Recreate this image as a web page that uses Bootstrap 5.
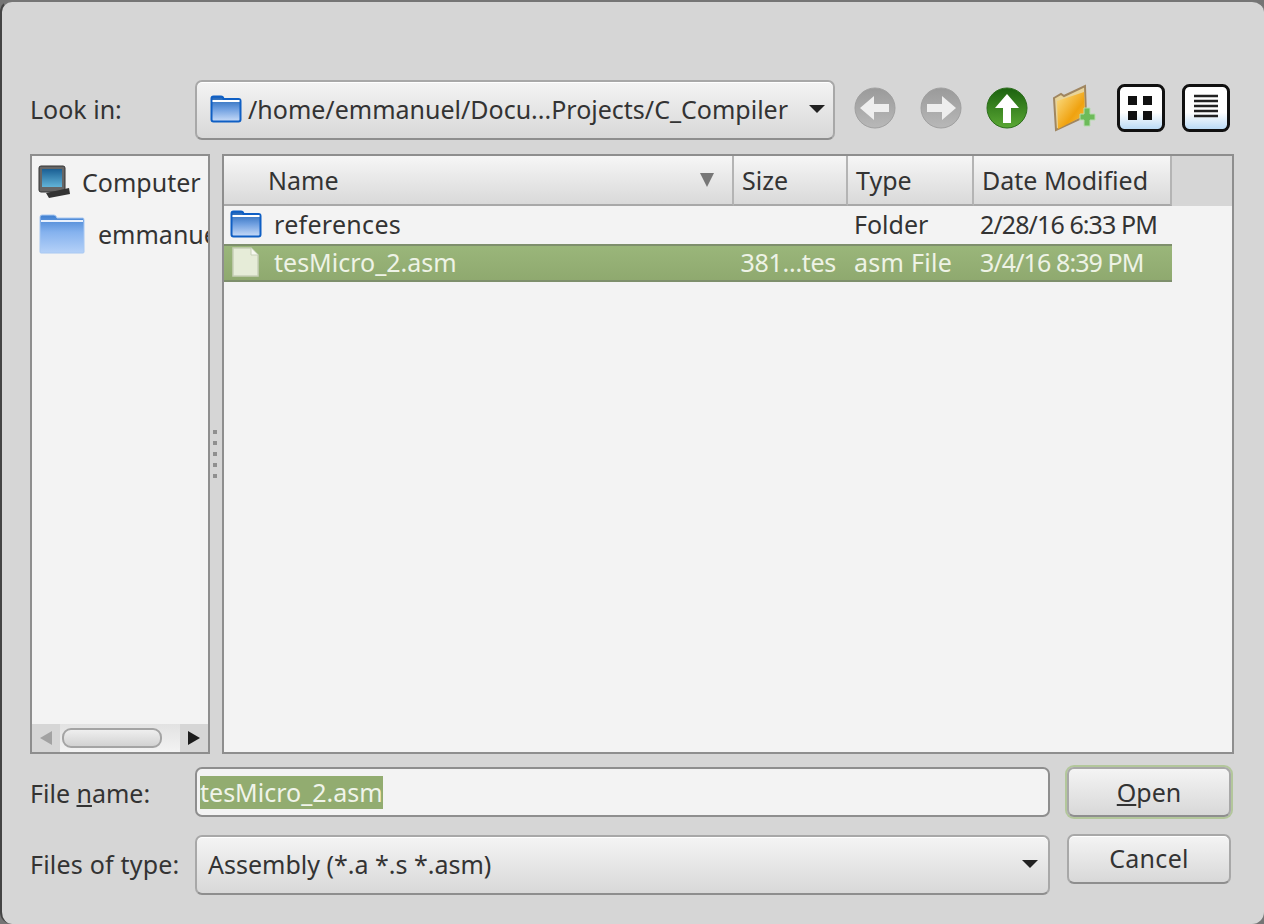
<!DOCTYPE html>
<html lang="en">
<head>
    <meta charset="UTF-8">
    <title>Open File</title>
    <link href="https://cdn.jsdelivr.net/npm/bootstrap@5.3.3/dist/css/bootstrap.min.css" rel="stylesheet">
    <style>
        html, body { height: 100%; }
        body { background: #757575; margin: 0; overflow: hidden; font-family: "Noto Sans", sans-serif; font-size: 25px; line-height: 34px; color: #333; }
        .dlg { width: 1264px; height: 924px; background: #d6d6d6; border-radius: 12px; border-top: 2px solid #767676; border-left: 2px solid #444; padding: 78px 30px 0 28px; }
        .lbl { width: 165px; flex: none; white-space: nowrap; margin: 0; }
        .lbl-up { padding-bottom: 3px; }
        .lbl-down { padding-top: 2px; }
        .lbl-wide { letter-spacing: .2px; }
        .raised { background: linear-gradient(#f4f4f4, #d8d8d8); border: 2px solid #a8a8a8; border-bottom-color: #8e8e8e; border-radius: 7px; box-shadow: inset 0 1px 0 #fff; }
        .look-combo { width: 640px; height: 60px; padding: 0 8px 3px 13px; flex: none; }
        .look-path { padding-left: 2px; }
        .arrow-down { width: 0; height: 0; border-left: 8px solid transparent; border-right: 8px solid transparent; border-top: 8px solid #222; flex: none; }
        .tool-row { margin-left: 19px; gap: 24px; margin-bottom: 5px; }
        .tool-folder { margin-left: -1px; margin-right: -4px; }
        .tool-list { margin-left: -7px; }
        .panes { height: 600px; margin-top: 14px; }
        .pane { background: #f3f3f3; border: 2px solid #8e8e8e; }
        .side-pane { width: 180px; flex: none; }
        .side-list { flex: 1; min-height: 0; padding: 9px 2px 0 5px; overflow: hidden; white-space: nowrap; }
        .side-comp { margin-left: 11px; }
        .side-two { margin-top: 15px; margin-left: 2px; width: 220px; }
        .side-name { margin-left: 13px; }
        .hbar { height: 28px; flex: none; background: #d6d6d6; }
        .hbar-trough { width: 120px; background: linear-gradient(#e2e2e2, #f3f3f3); padding: 4px 2px; }
        .hbar-thumb { width: 100px; height: 20px; border: 2px solid #a4a4a4; border-radius: 9px; background: linear-gradient(#efefef, #d2d2d2); }
        .tri-left { width: 0; height: 0; border-top: 7px solid transparent; border-bottom: 7px solid transparent; border-right: 12px solid #a2a2a2; }
        .tri-right { width: 0; height: 0; border-top: 7px solid transparent; border-bottom: 7px solid transparent; border-left: 12px solid #1c1c1c; }
        .splitter { width: 12px; flex: none; gap: 7px; padding-right: 2px; }
        .grip { width: 4px; height: 4px; background: #909090; }
        .main-pane { flex: 1; min-width: 0; }
        .head-strip { height: 50px; background: #d6d6d6; }
        .head-cell { height: 50px; padding-left: 8px; background: linear-gradient(#f6f6f6, #d9d9d9); border-right: 2px solid #b4b4b4; border-bottom: 2px solid #a8a8a8; white-space: nowrap; }
        .head-name { padding-left: 44px; }
        .w-name { width: 510px; } .w-size { width: 114px; } .w-type { width: 126px; } .w-date { width: 198px; }
        .file-row { width: 948px; height: 38px; white-space: nowrap; padding-bottom: 2px; }
        .file-cell { padding-left: 6px; overflow: hidden; }
        .file-cell svg { margin-right: 12px; }
        .file-row.sel { background: linear-gradient(#9ab67a, #8fa96f); border-top: 2px solid #7e8f6c; border-bottom: 2px solid #7e8f6c; color: #eef3e6; padding-bottom: 2px; }
        .size-val { padding-right: 12px; letter-spacing: -.3px; }
        .date-val { letter-spacing: -.9px; }
        .name-val { letter-spacing: .3px; }
        .sort-tri { width: 0; height: 0; border-left: 7px solid transparent; border-right: 7px solid transparent; border-top: 14px solid #777; margin-right: 18px; }
        .name-line { margin-top: 13px; }
        .type-line { margin-top: 18px; }
        .name-input { width: 855px; height: 50px; flex: none; background: #f3f3f3; border: 2px solid #8e8e8e; border-radius: 7px; padding: 0 3px; }
        .sel-text { background: #92ac70; color: #f0f4ea; line-height: 33px; height: 33px; display: inline-block; }
        .type-combo { width: 855px; height: 60px; flex: none; padding: 0 10px 2px 11px; }
        .btn-wide { width: 164px; height: 50px; margin-left: 17px; color: #333; font-size: 25px; padding: 0; }
        .btn-wide:hover { color: #333; }
        .btn-open { box-shadow: 0 0 0 2px #b3c79b; padding-top: 2px; }
        .btn-cancel { margin-top: -1px; letter-spacing: .3px; }
    </style>
</head>
<body>
<svg width="0" height="0" class="d-block">
    <defs>
        <linearGradient id="folderBlue" x1="0" y1="0" x2="0" y2="1">
            <stop offset="0" stop-color="#1e62b4"/><stop offset="0.5" stop-color="#6f9fe0"/><stop offset="1" stop-color="#c9dcf8"/>
        </linearGradient>
        <linearGradient id="folderPale" x1="0" y1="0" x2="0" y2="1">
            <stop offset="0" stop-color="#3f7fd0"/><stop offset="0.45" stop-color="#85b2ee"/><stop offset="1" stop-color="#b5d1f8"/>
        </linearGradient>
        <linearGradient id="greyDisc" x1="0" y1="0" x2="0" y2="1">
            <stop offset="0" stop-color="#9a9a9a"/><stop offset="1" stop-color="#b8b8b8"/>
        </linearGradient>
        <linearGradient id="greenDisc" x1="0" y1="0" x2="0" y2="1">
            <stop offset="0" stop-color="#1c620f"/><stop offset="1" stop-color="#5aa834"/>
        </linearGradient>
        <linearGradient id="amber" x1="0" y1="0" x2="1" y2="1">
            <stop offset="0" stop-color="#fbe08a"/><stop offset="0.6" stop-color="#f0a20f"/><stop offset="1" stop-color="#f6c24a"/>
        </linearGradient>
        <linearGradient id="tileFill" x1="0" y1="0" x2="0" y2="1">
            <stop offset="0" stop-color="#fff"/><stop offset="0.6" stop-color="#fff"/><stop offset="1" stop-color="#b5d8f5"/>
        </linearGradient>
        <linearGradient id="screen" x1="0" y1="0" x2="0" y2="1">
            <stop offset="0" stop-color="#1a5f94"/><stop offset="1" stop-color="#62b4d8"/>
        </linearGradient>
        <symbol id="ico-folder" viewBox="0 0 32 28">
            <path d="M1.5 6V3.5Q1.5 1.5 3.5 1.5H11Q13 1.5 13.5 4H28.5Q30.5 4 30.5 6V24.5Q30.5 26.5 28.5 26.5H3.5Q1.500 26.500 1.500 24.500Z" fill="url(#folderBlue)" stroke="#0f5fc4" stroke-width="2"/>
            <rect x="2.500" y="5" width="27" height="2" fill="#fff"/>
        </symbol>
    </defs>
</svg>
<div class="dlg d-flex flex-column">
    <div class="d-flex align-items-center">
        <label class="lbl lbl-up">Look in:</label>
        <div class="raised look-combo d-flex align-items-center">
            <svg width="32" height="28" class="flex-none me-1"><use href="#ico-folder"/></svg>
            <span class="flex-grow-1 text-nowrap look-path">/home/emmanuel/Docu...Projects/C_Compiler</span>
            <span class="arrow-down"></span>
        </div>
        <div class="d-flex align-items-center tool-row">
            <svg width="42" height="42" viewBox="0 0 42 42"><circle cx="21" cy="21" r="20" fill="url(#greyDisc)" stroke="#a0a0a0"/><path d="M6 21L20 9V17H35V25H20V33Z" fill="#eee"/></svg>
            <svg width="42" height="42" viewBox="0 0 42 42"><circle cx="21" cy="21" r="20" fill="url(#greyDisc)" stroke="#a0a0a0"/><path d="M36 21L22 9V17H7V25H22V33Z" fill="#eee"/></svg>
            <svg width="42" height="42" viewBox="0 0 42 42"><circle cx="21" cy="21" r="20" fill="url(#greenDisc)" stroke="#2c6d1c"/><path d="M21 7L33 21H25V36H17V21H9Z" fill="#fff"/></svg>
            <svg width="46" height="48" viewBox="0 0 46 48" class="tool-folder"><path d="M3 14L10 10L13 12L34 2L35 32L5 46Z" fill="#e8d49a" stroke="#a08660" stroke-width="2"/><path d="M6 17L33 8L34 31L7 45Z" fill="url(#amber)"/><path d="M29 30H33V24H39V30H44V36H39V42H33V36H29Z" fill="#6dbb5a" stroke="#b6dcae"/></svg>
            <svg width="48" height="48" viewBox="0 0 48 48"><rect x="1.500" y="1.500" width="45" height="45" rx="6" fill="url(#tileFill)" stroke="#111" stroke-width="3"/><path d="M11 12h9v9h-9zM26 12h9v9h-9zM11 27h9v9h-9zM26 27h9v9h-9z" fill="#111"/></svg>
            <svg width="48" height="48" viewBox="0 0 48 48" class="tool-list"><rect x="1.500" y="1.500" width="45" height="45" rx="6" fill="url(#tileFill)" stroke="#111" stroke-width="3"/><path d="M12 12h24M12 17h24M12 22h24M12 27h24M12 32h24" stroke="#222" stroke-width="2.500"/></svg>
        </div>
    </div>

    <div class="d-flex panes">
        <div class="pane side-pane d-flex flex-column">
            <div class="side-list">
                <div class="d-flex align-items-center">
                    <svg width="34" height="34" viewBox="0 0 34 34" class="flex-none"><rect x="2" y="1" width="26" height="26" rx="2" fill="#666" stroke="#333"/><rect x="5" y="4" width="20" height="18" fill="url(#screen)"/><path d="M9 28L32 23L33 29L12 33Z" fill="#333"/></svg>
                    <span class="side-comp">Computer</span>
                </div>
                <div class="d-flex align-items-center side-two">
                    <svg width="46" height="40" viewBox="0 0 46 40" class="flex-none"><path d="M1 7V3Q1 1 3 1H15Q17 1 18 4H44Q45 4 45 6V38Q45 39 44 39H2Q1 39 1 38Z" fill="url(#folderPale)" stroke="#a8c8f2"/><rect x="2" y="6" width="42" height="2" fill="#e8f1fd"/></svg>
                    <span class="side-name">emmanuel</span>
                </div>
            </div>
            <div class="hbar d-flex">
                <div class="d-flex align-items-center justify-content-center flex-fill"><span class="tri-left"></span></div>
                <div class="hbar-trough flex-none"><div class="hbar-thumb"></div></div>
                <div class="d-flex align-items-center justify-content-center flex-fill"><span class="tri-right"></span></div>
            </div>
        </div>

        <div class="splitter d-flex flex-column align-items-center justify-content-center">
            <span class="grip"></span><span class="grip"></span><span class="grip"></span><span class="grip"></span><span class="grip"></span>
        </div>

        <div class="pane main-pane">
            <div class="head-strip d-flex">
                <div class="head-cell head-name w-name d-flex align-items-center justify-content-between"><span>Name</span><span class="sort-tri"></span></div>
                <div class="head-cell w-size d-flex align-items-center">Size</div>
                <div class="head-cell w-type d-flex align-items-center">Type</div>
                <div class="head-cell w-date d-flex align-items-center">Date Modified</div>
            </div>
            <div class="file-row d-flex align-items-center">
                <div class="w-name d-flex align-items-center file-cell name-val"><svg width="32" height="28" class="flex-none"><use href="#ico-folder"/></svg>references</div>
                <div class="w-size file-cell"></div>
                <div class="w-type file-cell">Folder</div>
                <div class="w-date file-cell date-val">2/28/16 6:33 PM</div>
            </div>
            <div class="file-row sel d-flex align-items-center">
                <div class="w-name d-flex align-items-center file-cell"><svg width="32" height="30" viewBox="0 0 32 30" class="flex-none"><path d="M3 1H21L28 8V29H3Z" fill="#e6ecd8" stroke="#c7d0b8" stroke-width="1.500"/><path d="M21 1V8H28" fill="#f6f8f0" stroke="#c7d0b8"/></svg>tesMicro_2.asm</div>
                <div class="w-size file-cell text-end size-val">381...tes</div>
                <div class="w-type file-cell name-val">asm File</div>
                <div class="w-date file-cell date-val">3/4/16 8:39 PM</div>
            </div>
        </div>
    </div>

    <div class="d-flex align-items-center name-line">
        <label class="lbl lbl-down">File <u>n</u>ame:</label>
        <div class="name-input d-flex align-items-center"><span class="sel-text">tesMicro_2.asm</span></div>
        <button type="button" class="btn raised btn-wide btn-open"><u>O</u>pen</button>
    </div>
    <div class="d-flex align-items-start type-line">
        <label class="lbl align-self-center lbl-up lbl-wide">Files of type:</label>
        <div class="raised type-combo d-flex align-items-center justify-content-between">
            <span>Assembly (*.a *.s *.asm)</span>
            <span class="arrow-down"></span>
        </div>
        <button type="button" class="btn raised btn-wide btn-cancel">Cancel</button>
    </div>
</div>
</body>
</html>
